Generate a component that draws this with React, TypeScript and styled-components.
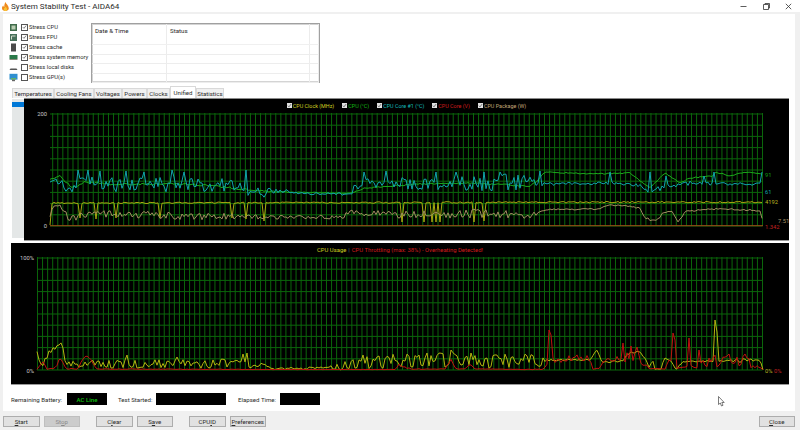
import React from 'react'
import styled, { createGlobalStyle } from 'styled-components'

const GlobalStyle = createGlobalStyle`
  html, body {
    margin: 0;
    padding: 0;
    background: #f0f0f0;
  }
  * {
    box-sizing: border-box;
  }
`

const Window = styled.div`
  width: 800px;
  height: 430px;
  display: flex;
  flex-direction: column;
  overflow: hidden;
  position: relative;
  background: #f0f0f0;
  color: #2a2a2a;
  font-family: Roboto, 'Liberation Sans', sans-serif;
  font-size: 6.1px;
`

const TitleBar = styled.div`
  height: 12px;
  flex: none;
  display: flex;
  align-items: center;
  background: #fff;
  padding-left: 2px;
`

const Title = styled.span`
  margin-left: 2px;
  font-size: 8.1px;
  flex: 1;
  white-space: nowrap;
`

const WindowButton = styled.span`
  width: 22.5px;
  height: 12px;
  display: flex;
  align-items: center;
  justify-content: center;
`

const Client = styled.div`
  flex: none;
  height: 397px;
  margin: 2px 5px 0 3px;
  padding: 9px 6px 0 8px;
  background: #fff;
`

const TopRow = styled.div`
  display: flex;
  height: 60px;
`

const StressList = styled.div`
  width: 80px;
  margin-top: -1px;
  display: flex;
  flex-direction: column;
  font-size: 5.8px;
`

const StressRow = styled.div`
  height: 10px;
  display: flex;
  align-items: center;
  white-space: nowrap;
`

const StressIcon = styled.svg`
  width: 9px;
  height: 9px;
  margin-right: 3px;
  margin-left: -2px;
  flex: none;
`

const Box = styled.span`
  width: 7px;
  height: 7px;
  margin-right: 1px;
  flex: none;
  border: 1px solid #555;
  background: #fff;
  display: flex;
  align-items: center;
  justify-content: center;
`

const LogTable = styled.div`
  width: 229px;
  height: 60px;
  border: 1px solid #a0a0a0;
  box-shadow: inset 0 0 0 1px #d4d4d4;
  display: flex;
  flex-direction: column;
`

const LogHeader = styled.div`
  height: 21px;
  flex: none;
  display: grid;
  grid-template-columns: 75px 143px 1fr;
  border-bottom: 1px solid #f0f0f0;
`

const LogRow = styled.div`
  height: 9.5px;
  flex: none;
  display: grid;
  grid-template-columns: 75px 143px 1fr;
  border-bottom: 1px solid #ededed;
`

const LogCell = styled.div`
  border-right: 1px solid #ececec;
  padding: 3px 0 0 3px;
  line-height: 8px;
  font-size: 6.2px;
`

const Tabs = styled.div`
  display: flex;
  align-items: flex-end;
  height: 12px;
  margin: 3px 0 0 1px;
`

const Tab = styled.div<{ $active?: boolean; $width: number }>`
  width: ${({ $width }) => $width}px;
  height: ${({ $active }) => ($active ? '12px' : '10px')};
  display: flex;
  align-items: center;
  justify-content: center;
  white-space: nowrap;
  background: ${({ $active }) => ($active ? '#fff' : '#f0f0f0')};
  border: 1px solid #d9d9d9;
  border-bottom: none;
`

const ChartRow = styled.div`
  display: flex;
  height: 143px;
`

const SensorList = styled.div`
  width: 12px;
  margin: 1px 0 3px 1px;
  background: #e4e7e7;
  padding-top: 3px;
`

const SensorItem = styled.div`
  height: 5px;
  background: #0078d7;
`

const Chart = styled.div<{ $height: number }>`
  flex: 1;
  height: ${({ $height }) => $height}px;
  position: relative;
  background: #000;
  border-top: 1px solid #8a8a8a;
  border-bottom: 1px solid #9a9a9a;
`

const FullChart = styled(Chart)`
  margin-top: 2px;
  border-top: none;
`

const Legend = styled.div<{ $size: number }>`
  height: 12px;
  padding-top: 1px;
  display: flex;
  justify-content: center;
  align-items: center;
  gap: 8px;
  font-size: ${({ $size }) => $size}px;
`

const LegendItem = styled.span<{ $color: string }>`
  display: flex;
  align-items: center;
  gap: 1px;
  color: ${({ $color }) => $color};
  white-space: nowrap;
`

const LegendBox = styled.span`
  width: 5px;
  height: 5px;
  background: #e0e0e0;
  display: flex;
  align-items: center;
  justify-content: center;
`

const LegendCheck = styled.svg`
  width: 5px;
  height: 5px;
`

const LegendText = styled.span<{ $color: string }>`
  color: ${({ $color }) => $color};
  white-space: nowrap;
`

const Separator = styled.span`
  margin: 0 -6px;
  color: #5a6a80;
`

const Plot = styled.svg`
  display: block;
  position: absolute;
  left: 0;
  top: 0;
  pointer-events: none;
`

const StatusRow = styled.div`
  display: flex;
  align-items: center;
  height: 12px;
  margin-top: 8px;
`

const StatusLabel = styled.span<{ $width: number }>`
  width: ${({ $width }) => $width}px;
  white-space: nowrap;
`

const StatusBox = styled.div<{ $width: number; $gap: number }>`
  width: ${({ $width }) => $width}px;
  height: 12px;
  margin-right: ${({ $gap }) => $gap}px;
  background: #000;
  color: #10c010;
  font-weight: 500;
  display: flex;
  align-items: center;
  justify-content: center;
`

const ButtonBar = styled.div`
  flex: 1;
  display: flex;
  padding: 5px 5px 0 3px;
`

const Button = styled.div<{ $disabled?: boolean; $gap?: number }>`
  width: 36.5px;
  height: 10.5px;
  margin-right: ${({ $gap }) => $gap ?? 4}px;
  background: ${({ $disabled }) => ($disabled ? '#cccccc' : '#e1e1e1')};
  border: 1px solid ${({ $disabled }) => ($disabled ? '#bfbfbf' : '#adadad')};
  color: ${({ $disabled }) => ($disabled ? '#8a8a8a' : '#2a2a2a')};
  display: flex;
  align-items: center;
  justify-content: center;
`

const Spacer = styled.div`
  flex: 1;
`

const Cursor = styled.svg`
  position: absolute;
  left: 718px;
  top: 396px;
`

type Key = [number, number, number]

const rng = (seed: number) => () => {
  seed = (seed + 0x6d2b79f5) | 0
  let t = Math.imul(seed ^ (seed >>> 15), 1 | seed)
  t = (t + Math.imul(t ^ (t >>> 7), 61 | t)) ^ t
  return ((t ^ (t >>> 14)) >>> 0) / 4294967296
}

// envelope keys are [x, y, noise]; spikes overwrite the sample nearest to x
const trace = (keys: Key[], seed: number, spikes: [number, number][] = [], step = 2, floor = 999) => {
  const r = rng(seed)
  const pts: [number, number][] = []
  let k = 0
  for (let x = keys[0][0]; x <= keys[keys.length - 1][0]; x += step) {
    while (k < keys.length - 2 && x > keys[k + 1][0]) k++
    const [x0, y0, n0] = keys[k]
    const [x1, y1, n1] = keys[k + 1]
    const f = (x - x0) / (x1 - x0)
    const n = n0 + (n1 - n0) * f
    const y = y0 + (y1 - y0) * f + (r() - 0.5) * 2 * n
    pts.push([x, Math.min(y, floor)])
  }
  spikes.forEach(([sx, sy]) => {
    const i = Math.round((sx - keys[0][0]) / step)
    if (pts[i]) pts[i][1] = sy
  })
  return pts.map(([x, y]) => `${x.toFixed(1)},${y.toFixed(1)}`).join(' ')
}

const cyanTrace = trace(
  [
    [50, 182, 5], [56, 178, 5], [66, 190, 6], [84, 182, 8], [100, 184, 8], [130, 185, 7], [180, 184, 8],
    [230, 186, 7], [262, 193, 5], [275, 190, 3], [300, 193.5, 1.2], [345, 194, 1.2], [352, 190, 4],
    [370, 184, 7], [430, 185, 7], [450, 183, 7], [470, 184, 7], [490, 181, 10], [530, 183, 8], [536, 183, 3],
    [560, 184, 1.5], [620, 183, 1.5], [640, 186, 2], [652, 193, 1.5], [660, 188, 3], [680, 183, 3],
    [720, 184, 1.5], [761, 184, 1.2], [763, 192, 0],
  ],
  11,
  [
    [364, 172], [385, 171], [436, 172], [456, 172], [484, 172], [500, 172], [540, 171], [610, 172], [650, 172],
    [666, 176], [704, 176], [714, 172], [762, 172],
    [78, 170], [88, 170], [100, 171], [126, 171], [143, 172], [172, 170], [183, 172], [245, 170],
  ],
)

const greenTrace = trace(
  [
    [50, 180, 0.8], [60, 176, 0.8], [72, 188, 1], [85, 182, 1], [110, 184, 1], [150, 184, 1], [180, 184, 1],
    [215, 186, 1], [250, 190, 1], [280, 192, 0.6], [350, 193.5, 0.5], [365, 188, 0.6], [420, 184, 0.6],
    [470, 183, 0.6], [530, 186, 0.8], [536, 182, 0.8], [545, 172, 0.6], [590, 174, 0.6], [630, 173, 0.6],
    [650, 188, 0.6], [665, 173, 0.6], [680, 183, 0.6], [690, 178, 0.6], [712, 176, 0.6], [716, 172, 0.6],
    [730, 176, 0.6], [745, 172, 0.6], [763, 174, 0.3],
  ],
  23,
)

const yellowTrace = trace(
  [[50, 203, 0.6], [763, 202, 0.8]],
  37,
  [
    [50, 225], [80, 218], [95, 219], [115, 218], [160, 218], [232, 218], [246, 219], [264, 221], [402, 222],
    [424, 222], [432, 222], [436, 222], [440, 222], [474, 222], [484, 221],
  ],
)

const brownTrace = trace(
  [
    [50, 216, 1], [53, 206, 1], [60, 205, 1], [68, 218, 4], [90, 214, 4], [130, 215, 4], [200, 216, 4],
    [270, 217, 2], [340, 217, 2], [352, 213, 3], [400, 215, 4], [480, 213, 5], [530, 216, 3],
    [545, 209.5, 0.6], [598, 209, 0.8], [612, 205, 0.8], [625, 206, 0.6], [640, 208, 0.8], [646, 219, 1.5],
    [657, 220, 1.5], [663, 213, 1], [672, 211, 0.8], [678, 222, 0.5], [686, 211, 1], [715, 209, 0.8],
    [752, 210, 0.8], [760, 211, 0.5], [763, 222, 0],
  ],
  41,
)

const usageTrace = trace(
  [
    [37, 352, 0.5], [41, 366, 2], [47, 358, 3], [52, 348, 5], [60, 343, 1], [62, 342, 0.5], [66, 364, 3],
    [110, 364, 4.5], [180, 364, 4.5], [240, 363, 4.5], [250, 367, 3], [265, 365, 3], [272, 369, 1],
    [330, 368, 2], [346, 365, 5], [360, 362, 7], [400, 361, 7], [450, 360, 8], [480, 361, 8], [540, 361, 7],
    [546, 360, 1], [590, 360, 0.6], [597, 350, 1], [602, 362, 1], [622, 361, 1], [630, 352, 1], [640, 352, 1],
    [646, 360, 0.5], [650, 370, 0.3], [652, 357, 0.5], [655, 369, 0.3], [661, 369, 0.3], [664, 358, 1],
    [672, 362, 0.5], [676, 370, 0.5], [682, 362, 1], [708, 361, 0.5], [716, 361, 0.5], [740, 360, 2.5],
    [760, 360, 1], [763, 370, 0],
  ],
  53,
  [[450, 350], [470, 353], [714, 320], [716, 332], [242, 354], [246, 353], [126, 355], [176, 357]],
  2,
  370,
)

const throttleTrace = trace(
  [
    [37, 369, 0.3], [43, 362, 1], [47, 369, 0.5], [56, 368, 1], [60, 357, 0.5], [66, 369, 0.5], [78, 369, 1],
    [84, 357, 1], [90, 357, 1], [96, 369, 0.3], [270, 369.5, 0.2], [395, 369.5, 0.2], [400, 364, 2],
    [410, 369, 0.5], [445, 369, 0.3], [451, 360, 1], [456, 369, 0.3], [465, 369, 0.3], [470, 364, 1],
    [475, 369, 0.3], [530, 369.5, 0.3], [544, 369, 0.5], [552, 360, 4], [590, 358, 4], [593, 369, 0.5],
    [600, 368, 0.5], [606, 358, 3], [640, 356, 7], [648, 368, 1], [665, 369, 0.3], [670, 358, 1],
    [676, 369, 0.5], [684, 367, 1], [692, 366, 1], [700, 362, 7], [740, 360, 7], [755, 365, 3], [763, 370, 0],
  ],
  67,
  [
    [548, 330], [550, 335], [622, 343], [630, 346], [636, 347], [672, 333], [674, 340], [688, 338],
    [698, 350], [712, 358], [728, 354], [744, 354],
  ],
  2,
  370,
)

const grid = (left: number, top: number, bottom: number) => {
  const lines = []
  for (let i = 0; i <= 10; i++) {
    const y = top + ((bottom - top) * i) / 10
    lines.push(<line key={`h${i}`} x1={left} x2={762.5} y1={y} y2={y} />)
  }
  for (let x = 762.5, i = 0; x >= left; x -= 5.07, i++) {
    lines.push(<line key={`v${i}`} x1={x} x2={x} y1={top - 1} y2={bottom} />)
  }
  return <g stroke="#0b660b" strokeWidth="1">{lines}</g>
}

const Check = () => (
  <svg width="6" height="6" viewBox="0 0 6 6">
    <path d="M1 3.2 2.4 4.6 5 1.2" fill="none" stroke="#444" strokeWidth="0.8" />
  </svg>
)

const stressItems = [
  { label: 'Stress CPU', checked: true, icon: 'cpu' },
  { label: 'Stress FPU', checked: true, icon: 'fpu' },
  { label: 'Stress cache', checked: true, icon: 'cache' },
  { label: 'Stress system memory', checked: true, icon: 'memory' },
  { label: 'Stress local disks', checked: false, icon: 'disk' },
  { label: 'Stress GPU(s)', checked: false, icon: 'gpu' },
]

const Icon = ({ name }: { name: string }) => (
  <StressIcon viewBox="0 0 9 9">
    {name === 'cpu' && (
      <>
        <rect x="1" y="1" width="7" height="7" fill="#3f6b4a" />
        <rect x="2.5" y="2.5" width="4" height="4" fill="#b9cdb2" />
      </>
    )}
    {name === 'fpu' && (
      <>
        <rect x="1" y="1" width="7" height="7" fill="#47705a" />
        <path d="M2.5 6.5V3H6.5" fill="none" stroke="#d3dccb" strokeWidth="1" />
      </>
    )}
    {name === 'cache' && <rect x="2" y="0.5" width="5" height="8" fill="#4a4a4a" />}
    {name === 'memory' && (
      <>
        <rect x="0.5" y="2" width="8" height="4" fill="#2c7a4a" />
        <rect x="0.5" y="6" width="8" height="0.8" fill="#6d6d5a" />
      </>
    )}
    {name === 'disk' && <path d="M1.5 5.5h6l1 1.5H.5z" fill="#555" />}
    {name === 'gpu' && (
      <>
        <rect x="0.5" y="0.8" width="8" height="5.8" fill="#2f8fd0" />
        <rect x="2" y="5" width="5" height="1.6" fill="#5fb36a" />
        <rect x="3" y="6.6" width="3" height="1.6" fill="#666" />
      </>
    )}
  </StressIcon>
)

const tabs = [
  { label: 'Temperatures', width: 42 },
  { label: 'Cooling Fans', width: 40 },
  { label: 'Voltages', width: 28 },
  { label: 'Powers', width: 25 },
  { label: 'Clocks', width: 23 },
  { label: 'Unified', width: 26, active: true },
  { label: 'Statistics', width: 28 },
]

const legend = [
  { label: 'CPU Clock (MHz)', color: '#d0d020' },
  { label: 'CPU (°C)', color: '#14b814' },
  { label: 'CPU Core #1 (°C)', color: '#14bcbc' },
  { label: 'CPU Core (V)', color: '#d01c1c' },
  { label: 'CPU Package (W)', color: '#c4a878' },
]

export default function App() {
  return (
    <Window>
      <GlobalStyle />
      <TitleBar>
        <svg width="7" height="9" viewBox="0 0 7 9">
          <path d="M3.4 0C4 2 6.8 3.6 6.8 6.2 6.8 8 5.2 9 3.4 9S0 8 0 6.2C0 5 .6 4.2 1.2 3.5 1.4 4.4 1.8 4.8 2.3 5 2.2 3.4 2.6 1.4 3.4 0Z" fill="#ef8a1d" />
          <path d="M3.5 4.5C4.3 5.5 5 6 5 7.2 5 8.2 4.3 9 3.4 9S1.8 8.2 1.8 7.3C1.8 6.2 3 5.6 3.5 4.5Z" fill="#f7c531" />
        </svg>
        <Title>System Stability Test - AIDA64</Title>
        <WindowButton>
          <svg width="7" height="7" viewBox="0 0 7 7">
            <path d="M.5 3.5h6" stroke="#333" strokeWidth="0.8" />
          </svg>
        </WindowButton>
        <WindowButton>
          <svg width="7" height="7" viewBox="0 0 7 7">
            <path d="M2 1.5V.5h4.5V5H5.5M.5 1.5h5v5h-5z" fill="none" stroke="#333" strokeWidth="0.8" />
          </svg>
        </WindowButton>
        <WindowButton>
          <svg width="7" height="7" viewBox="0 0 7 7">
            <path d="M.8.8 6.2 6.2M6.2.8.8 6.2" stroke="#333" strokeWidth="0.8" />
          </svg>
        </WindowButton>
      </TitleBar>

      <Client>
        <TopRow>
          <StressList>
            {stressItems.map((item) => (
              <StressRow key={item.label}>
                <Icon name={item.icon} />
                <Box>{item.checked && <Check />}</Box>
                {item.label}
              </StressRow>
            ))}
          </StressList>
          <LogTable>
            <LogHeader>
              <LogCell>Date &amp; Time</LogCell>
              <LogCell>Status</LogCell>
              <LogCell />
            </LogHeader>
            {[0, 1, 2, 3].map((i) => (
              <LogRow key={i}>
                <LogCell />
                <LogCell />
                <LogCell />
              </LogRow>
            ))}
          </LogTable>
        </TopRow>

        <Tabs>
          {tabs.map((tab) => (
            <Tab key={tab.label} $active={tab.active} $width={tab.width}>
              {tab.label}
            </Tab>
          ))}
        </Tabs>

        <ChartRow>
          <SensorList>
            <SensorItem />
          </SensorList>
          <Chart $height={143}>
            <Plot width="765" height="141" viewBox="24 99 765 141">
              {grid(50, 114, 226)}
              <polyline points={greenTrace} fill="none" stroke="#1aa81a" strokeWidth="1" />
              <polyline points={yellowTrace} fill="none" stroke="#a8a810" strokeWidth="1" />
              <polyline points={brownTrace} fill="none" stroke="#a08c60" strokeWidth="1" />
              <polyline points={cyanTrace} fill="none" stroke="#10a4ac" strokeWidth="1" />
              <line x1="50" x2="763" y1="225.7" y2="225.7" stroke="#a04a18" strokeWidth="1" />
              <g fontSize="5.8" fontFamily="Roboto, sans-serif">
                <text x="47" y="116" textAnchor="end" fill="#c8c8c8">200</text>
                <text x="47" y="228" textAnchor="end" fill="#c8c8c8">0</text>
                <text x="765" y="177" fill="#12a012">91</text>
                <text x="765" y="194" fill="#12a8a8">61</text>
                <text x="765" y="204" fill="#b8b820">4192</text>
                <text x="765" y="229" fill="#c02020">1.342</text>
                <text x="778" y="223" fill="#a89468">7.51</text>
              </g>
            </Plot>
            <Legend $size={5.4}>
              {legend.map((item) => (
                <LegendItem key={item.label} $color={item.color}>
                  <LegendBox>
                    <LegendCheck viewBox="0 0 6 6">
                      <path d="M1 3.2 2.4 4.6 5 1.2" fill="none" stroke="#444" strokeWidth="0.8" />
                    </LegendCheck>
                  </LegendBox>
                  {item.label}
                </LegendItem>
              ))}
            </Legend>
          </Chart>
        </ChartRow>

        <FullChart $height={142}>
          <Plot width="778" height="141" viewBox="11 243 778 141">
            {grid(37, 258, 370)}
            <polyline points={usageTrace} fill="none" stroke="#b4b410" strokeWidth="1" />
            <polyline points={throttleTrace} fill="none" stroke="#c01010" strokeWidth="1" />
            <g fontSize="5.8" fontFamily="Roboto, sans-serif">
              <text x="34" y="260" textAnchor="end" fill="#c8c8c8">100%</text>
              <text x="34" y="373" textAnchor="end" fill="#c8c8c8">0%</text>
              <text x="765" y="373" fill="#b8b820">0%</text>
              <text x="774" y="373" fill="#c02020">0%</text>
            </g>
          </Plot>
          <Legend $size={5.9}>
            <LegendText $color="#d0d020">CPU Usage</LegendText>
            <Separator>|</Separator>
            <LegendText $color="#d01c1c">CPU Throttling (max: 38%) - Overheating Detected!</LegendText>
          </Legend>
        </FullChart>

        <StatusRow>
          <StatusLabel $width={56}>Remaining Battery:</StatusLabel>
          <StatusBox $width={40} $gap={11}>AC Line</StatusBox>
          <StatusLabel $width={38}>Test Started:</StatusLabel>
          <StatusBox $width={70} $gap={12} />
          <StatusLabel $width={42}>Elapsed Time:</StatusLabel>
          <StatusBox $width={40} $gap={0} />
        </StatusRow>
      </Client>

      <ButtonBar>
        <Button><u>S</u>tart</Button>
        <Button $disabled $gap={16}>St<u>o</u>p</Button>
        <Button>C<u>l</u>ear</Button>
        <Button $gap={16}>S<u>a</u>ve</Button>
        <Button>CPU<u>I</u>D</Button>
        <Button $gap={0}><u>P</u>references</Button>
        <Spacer />
        <Button $gap={0}><u>C</u>lose</Button>
      </ButtonBar>

      <Cursor width="7" height="11" viewBox="0 0 7 11">
        <path d="M.5.5V8.5L2.3 7 3.5 10 5 9.3 3.8 6.5H6.2z" fill="#fff" stroke="#444" strokeWidth="0.7" />
      </Cursor>
    </Window>
  )
}
